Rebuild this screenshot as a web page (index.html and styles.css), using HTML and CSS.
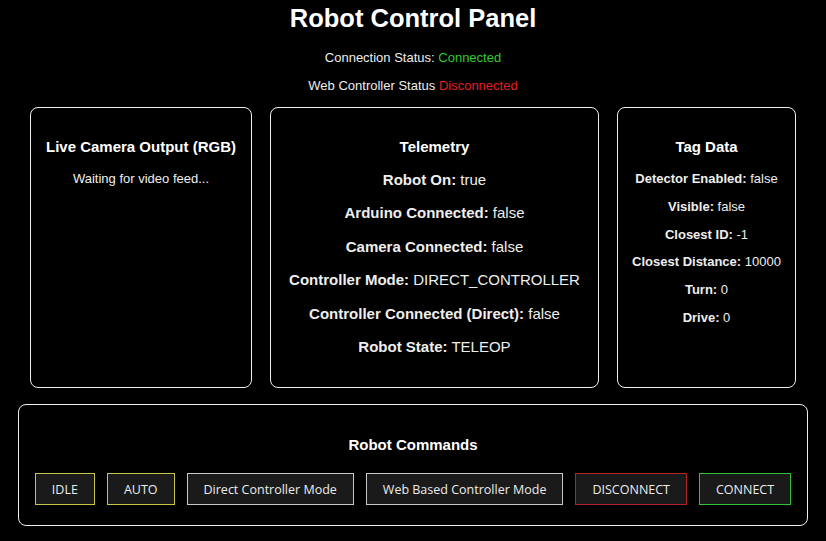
FILE: index.html
```html
<!DOCTYPE html>
<html lang="en">
<head>
<meta charset="utf-8">
<title>Robot Control Panel</title>
<link rel="stylesheet" href="styles.css">
</head>
<body>
  <h1 class="title">Robot Control Panel</h1>
  <p class="status">Connection Status: <span class="ok">Connected</span></p>
  <p class="status">Web Controller Status <span class="bad">Disconnected</span></p>

  <div class="panels">
    <section class="card camera">
      <h3 class="card-title">Live Camera Output (RGB)</h3>
      <p class="feed">Waiting for video feed...</p>
    </section>

    <section class="card telemetry">
      <h3 class="card-title">Telemetry</h3>
      <p class="row"><b>Robot On:</b> true</p>
      <p class="row"><b>Arduino Connected:</b> false</p>
      <p class="row"><b>Camera Connected:</b> false</p>
      <p class="row"><b>Controller Mode:</b> DIRECT_CONTROLLER</p>
      <p class="row"><b>Controller Connected (Direct):</b> false</p>
      <p class="row"><b>Robot State:</b> TELEOP</p>
    </section>

    <section class="card tags">
      <h3 class="card-title">Tag Data</h3>
      <p class="row-sm"><b>Detector Enabled:</b> false</p>
      <p class="row-sm"><b>Visible:</b> false</p>
      <p class="row-sm"><b>Closest ID:</b> -1</p>
      <p class="row-sm"><b>Closest Distance:</b> 10000</p>
      <p class="row-sm"><b>Turn:</b> 0</p>
      <p class="row-sm"><b>Drive:</b> 0</p>
    </section>
  </div>

  <section class="card commands">
    <h3 class="card-title">Robot Commands</h3>
    <div class="buttons">
      <button class="btn btn-mode">IDLE</button>
      <button class="btn btn-mode">AUTO</button>
      <button class="btn">Direct Controller Mode</button>
      <button class="btn">Web Based Controller Mode</button>
      <button class="btn btn-off">DISCONNECT</button>
      <button class="btn btn-on">CONNECT</button>
    </div>
  </section>
</body>
</html>
```
FILE: styles.css
```css
* {
  box-sizing: border-box;
}

body {
  margin: 0;
  background: #000;
  color: #eee;
  font-family: "Liberation Sans", Arial, sans-serif;
  text-align: center;
}

.title {
  margin: 3px 0 0;
  font-size: 25.5px;
  line-height: 30px;
  color: #fff;
}

.status {
  margin: 17px 0 0;
  font-size: 13px;
  line-height: 16px;
}

.status + .status {
  margin-top: 12px;
}

.ok {
  color: #2ecc2e;
}

.bad {
  color: #e02020;
}

.panels {
  display: grid;
  grid-template-columns: 222px 329px 179px;
  justify-content: center;
  gap: 18px;
  margin-top: 13px;
}

.card {
  border: 1px solid #eee;
  border-radius: 8px;
  height: 281px;
  padding-top: 30px;
}

.card-title {
  margin: 0;
  font-size: 15px;
  line-height: 18px;
  color: #fff;
}

.feed {
  margin: 15px 0 0;
  font-size: 13px;
  line-height: 16px;
}

.row {
  margin: 15px 0 0;
  font-size: 15px;
  line-height: 18.4px;
}

.row-sm {
  margin: 13px 0 0;
  font-size: 13px;
  line-height: 14.8px;
}

.tags .row-sm:first-of-type {
  margin-top: 16px;
}

.commands {
  margin: 16px 18px 0;
  height: 122px;
  padding-top: 31px;
}

.buttons {
  display: flex;
  justify-content: center;
  gap: 12px;
  margin-top: 19px;
}

.btn {
  height: 32px;
  padding: 0 16px;
  background: #1a1a1a;
  color: #ececec;
  border: 1px solid #c8c8c8;
  font-family: "Open Sans", sans-serif;
  font-size: 12.5px;
}

.btn-mode {
  border-color: #c9c54a;
}

.btn-off {
  border-color: #b02424;
}

.btn-on {
  border-color: #34c034;
}
```
